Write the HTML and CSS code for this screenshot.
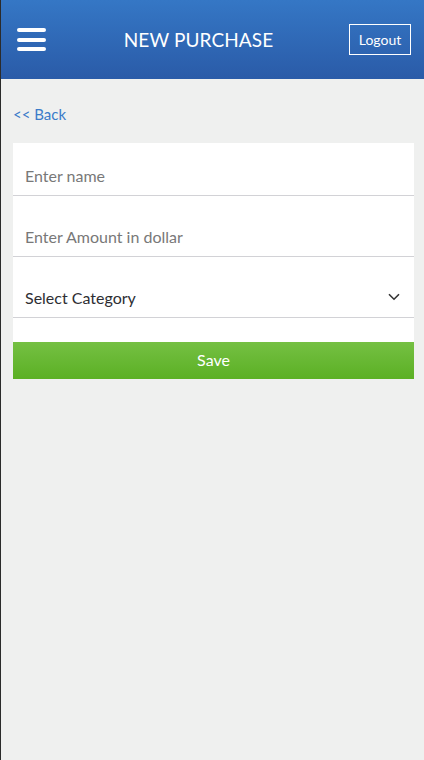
FILE: index.html
```html
<!DOCTYPE html>
<html>
<head>
<meta charset="utf-8">
<link rel="stylesheet" href="styles.css">
</head>
<body>
<div class="app">
  <header class="topbar">
    <button class="menu" aria-label="Menu">
      <span></span><span></span><span></span>
    </button>
    <h1 class="title">NEW PURCHASE</h1>
    <button class="logout">Logout</button>
  </header>
  <main class="content">
    <a class="back" href="#">&lt;&lt; Back</a>
    <form class="card">
      <div class="field"><input type="text" placeholder="Enter name"></div>
      <div class="field"><input type="text" placeholder="Enter Amount in dollar"></div>
      <div class="field select">
        <span>Select Category</span>
        <svg width="12" height="8" viewBox="0 0 12 8"><path d="M1 1.2 L6 6.2 L11 1.2" fill="none" stroke="#333" stroke-width="1.6"/></svg>
      </div>
    </form>
    <button class="save">Save</button>
  </main>
</div>
</body>
</html>
```
FILE: styles.css
```css
* { box-sizing: border-box; }
html, body { margin: 0; height: 100%; }
body {
  font-family: Lato, "Open Sans", sans-serif;
  background: #eff0ef;
  border-left: 1px solid #2b2b2b;
}
.app { min-height: 100%; }
.topbar {
  height: 79px;
  background: linear-gradient(#3577c5, #2a5ba8);
  display: flex;
  align-items: center;
  padding: 0 13px 0 16px;
}
.menu {
  width: 29px;
  height: 23px;
  border: 0;
  padding: 0;
  background: none;
  display: flex;
  flex-direction: column;
  justify-content: space-between;
}
.menu span {
  display: block;
  height: 4px;
  width: 29px;
  border-radius: 2px;
  background: #fff;
}
.title {
  flex: 1;
  margin: 0;
  text-align: center;
  color: #fff;
  font-weight: 400;
  font-size: 19px;
  letter-spacing: 0.1px;
  padding-left: 2px;
}
.logout {
  width: 62px;
  height: 31px;
  border: 1px solid #fff;
  background: transparent;
  color: #fff;
  font-family: inherit;
  font-size: 14px;
  padding: 0;
  margin-bottom: 0;
}
.content { padding: 0 10px 0 12px; }
.back {
  display: block;
  color: #3b7bc9;
  text-decoration: none;
  font-size: 15px;
  padding-top: 26px;
  height: 64px;
}
.card {
  background: #fff;
  padding: 14px 0 24px;
  margin: 0;
}
.field {
  height: 39px;
  border-bottom: 1px solid #d2d2d6;
  margin-bottom: 22px;
  display: flex;
  align-items: center;
  padding: 0 14px 2px 12px;
}
.field:last-child { margin-bottom: 0; }
.field input {
  border: 0;
  outline: none;
  width: 100%;
  font-family: inherit;
  font-size: 16px;
  color: #333;
  padding: 0;
  background: transparent;
}
.field input::placeholder { color: #787878; }
.select {
  justify-content: space-between;
  color: #2e2e33;
  font-size: 16px;
}
.save {
  display: block;
  width: 100%;
  height: 37px;
  border: 0;
  background: linear-gradient(#75c043, #5bb024);
  color: #fff;
  font-family: inherit;
  font-size: 16px;
  padding: 0 0 3px;
}
```
